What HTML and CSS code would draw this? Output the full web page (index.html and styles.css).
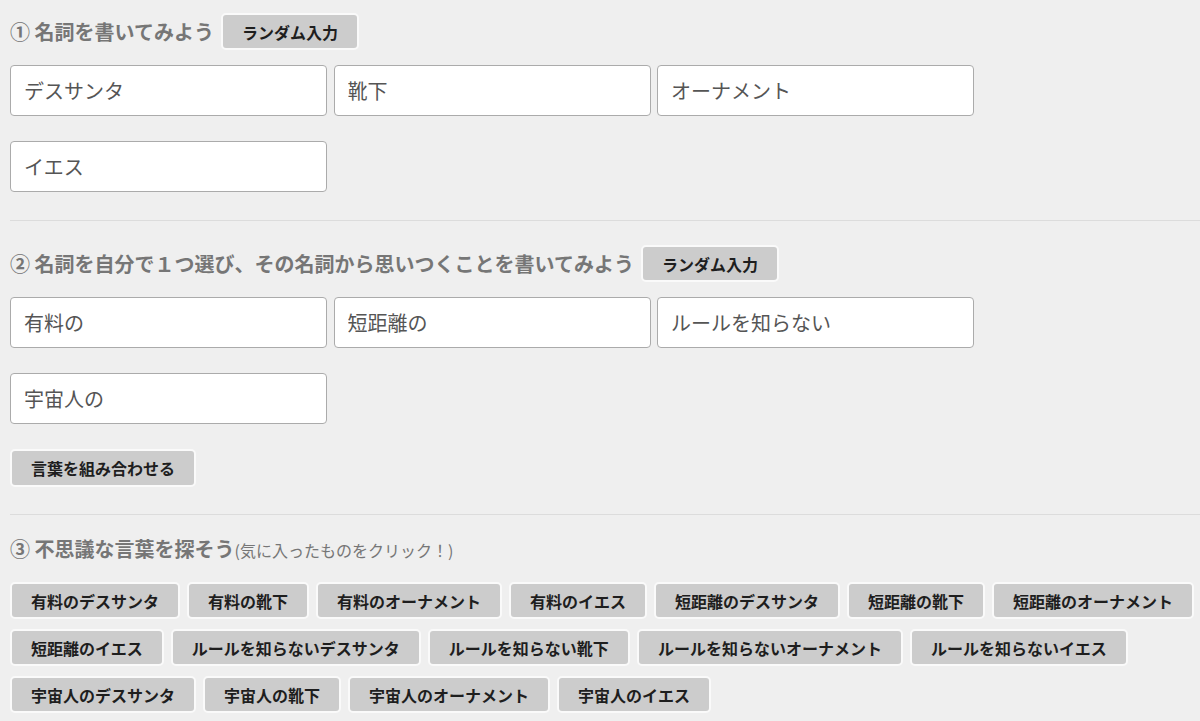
FILE: index.html
```html
<!DOCTYPE html>
<html lang="ja">
<head>
    <meta charset="UTF-8">
    <meta name="viewport" content="width=device-width, initial-scale=1.0">
    <title>不思議な言葉ジェネレーター</title>
    <link rel="stylesheet" href="styles.css">
</head>
<body>
    <section class="step step-first">
        <div class="step-title">
            <h2>① 名詞を書いてみよう</h2>
            <button type="button" class="btn" id="randomNouns">ランダム入力</button>
        </div>
        <div class="word-inputs" id="nouns">
            <input type="text" class="word" value="デスサンタ">
            <input type="text" class="word" value="靴下">
            <input type="text" class="word" value="オーナメント">
            <input type="text" class="word" value="イエス">
        </div>
    </section>
    <hr class="divider">
    <section class="step">
        <div class="step-title">
            <h2>② 名詞を自分で１つ選び、その名詞から思いつくことを書いてみよう</h2>
            <button type="button" class="btn" id="randomMods">ランダム入力</button>
        </div>
        <div class="word-inputs" id="mods">
            <input type="text" class="word" value="有料の">
            <input type="text" class="word" value="短距離の">
            <input type="text" class="word" value="ルールを知らない">
            <input type="text" class="word" value="宇宙人の">
        </div>
        <button type="button" class="btn combine" id="combine">言葉を組み合わせる</button>
    </section>
    <hr class="divider">
    <section class="step step-last">
        <div class="step-title plain">
            <h2>③ 不思議な言葉を探そう<small>(気に入ったものをクリック！)</small></h2>
        </div>
        <div class="chips" id="chips">
            <button type="button" class="btn">有料のデスサンタ</button>
            <button type="button" class="btn">有料の靴下</button>
            <button type="button" class="btn">有料のオーナメント</button>
            <button type="button" class="btn">有料のイエス</button>
            <button type="button" class="btn">短距離のデスサンタ</button>
            <button type="button" class="btn">短距離の靴下</button>
            <button type="button" class="btn">短距離のオーナメント</button>
            <button type="button" class="btn">短距離のイエス</button>
            <button type="button" class="btn">ルールを知らないデスサンタ</button>
            <button type="button" class="btn">ルールを知らない靴下</button>
            <button type="button" class="btn">ルールを知らないオーナメント</button>
            <button type="button" class="btn">ルールを知らないイエス</button>
            <button type="button" class="btn">宇宙人のデスサンタ</button>
            <button type="button" class="btn">宇宙人の靴下</button>
            <button type="button" class="btn">宇宙人のオーナメント</button>
            <button type="button" class="btn">宇宙人のイエス</button>
        </div>
    </section>
    <script>
        const chips = document.getElementById('chips');
        function values(id) {
            return Array.from(document.querySelectorAll('#' + id + ' input'))
                .map(el => el.value.trim())
                .filter(v => v);
        }
        document.getElementById('combine').onclick = function() {
            chips.innerHTML = '';
            values('mods').forEach(m => {
                values('nouns').forEach(n => {
                    const b = document.createElement('button');
                    b.type = 'button';
                    b.className = 'btn';
                    b.textContent = m + n;
                    chips.appendChild(b);
                });
            });
        };
    </script>
</body>
</html>
```

FILE: styles.css
```css
body {
    margin: 0;
    padding: 0 0 0 10px;
    background: #efefef;
    font-family: "Noto Sans CJK JP", "Noto Sans", sans-serif;
    color: #222;
}
.step {
    padding-top: 24px;
}
.step-first {
    padding-top: 13px;
    padding-bottom: 28px;
}
.step-last {
    padding-top: 15px;
}
.step-title {
    display: flex;
    align-items: center;
    gap: 7px;
    height: 37px;
    margin-bottom: 15px;
}
.step-title.plain {
    margin-bottom: 15px;
}
.step-title h2 {
    margin: 0;
    font-size: 20px;
    font-weight: 700;
    color: #767676;
    line-height: 1;
    white-space: nowrap;
}
.step-title small {
    font-size: 16px;
    font-weight: 400;
    color: #767676;
}
.btn {
    box-sizing: border-box;
    height: 37px;
    padding: 0 19px;
    background: #cccccc;
    border: 2px solid #fafafa;
    border-radius: 5px;
    font-family: inherit;
    font-size: 16px;
    font-weight: 700;
    color: #1e1e1e;
    line-height: 1;
    white-space: nowrap;
    cursor: pointer;
}
.btn:hover {
    background: #c2c2c2;
}
.word-inputs {
    display: flex;
    flex-wrap: wrap;
    gap: 25px 6.5px;
    width: 970px;
}
.word {
    box-sizing: border-box;
    width: 317px;
    height: 51px;
    padding: 0 13px;
    border: 1px solid #ababab;
    border-radius: 4px;
    background: #fff;
    font-family: inherit;
    font-size: 20px;
    color: #555;
}
.combine {
    display: block;
    height: 38px;
    margin: 25px 0 27px;
}
.divider {
    margin: 0;
    border: none;
    border-top: 1px solid #dcdcdc;
}
.chips {
    display: flex;
    flex-wrap: wrap;
    gap: 10px 7px;
}
```
